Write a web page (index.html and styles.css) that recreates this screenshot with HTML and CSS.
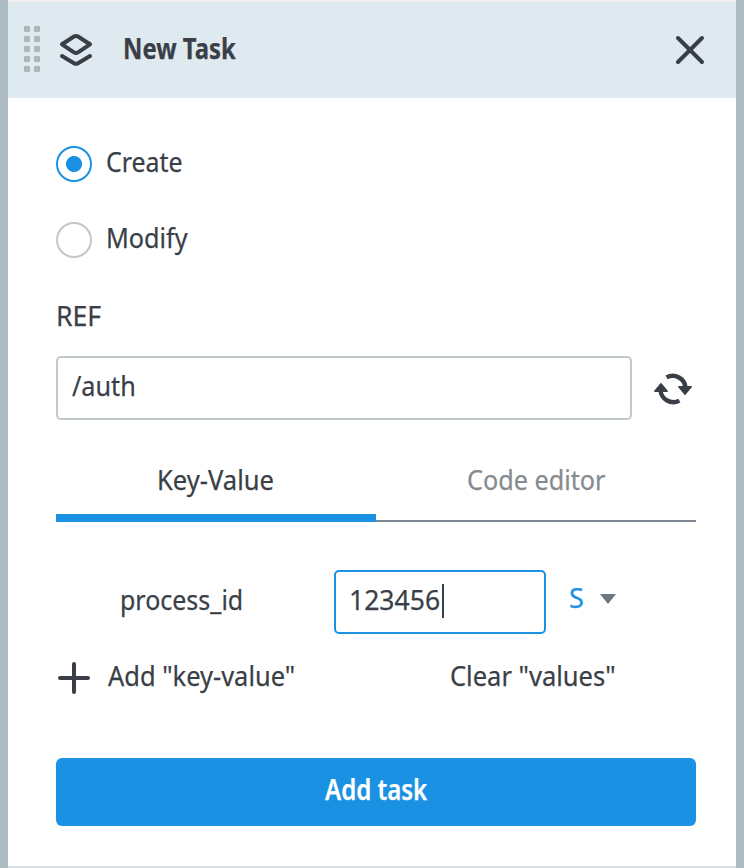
FILE: index.html
```html
<!DOCTYPE html>
<html lang="en">
<head>
<meta charset="utf-8">
<title>New Task</title>
<link rel="stylesheet" href="styles.css">
</head>
<body>
<main class="panel">
  <header class="header">
    <div class="grip"><i></i><i></i><i></i><i></i><i></i><i></i><i></i><i></i><i></i><i></i></div>
    <svg class="layers" width="36" height="36" viewBox="0 0 36 36"><path d="M16 4.500Q18 3.300 20 4.500L32 12.300L20 20.300Q18 21.700 16 20.300L4 12.300ZM4 24L16 31.200Q18 32.400 20 31.200L32 24"/></svg>
    <h1 class="title"><span class="t t-title">New Task</span></h1>
    <svg class="close" width="32" height="32" viewBox="0 0 32 32"><path d="M4 4L28 28M28 4L4 28"/></svg>
  </header>
  <section class="content">
    <div class="radio"><span class="dot on"></span><span class="t t-create">Create</span></div>
    <div class="radio"><span class="dot"></span><span class="t t-modify">Modify</span></div>
    <div class="label"><span class="t t-ref">REF</span></div>
    <div class="ref-row">
      <div class="input ref-input"><span class="t t-auth">/auth</span></div>
      <svg class="refresh" width="38" height="34" viewBox="0 0 38 34"><path class="arc" d="M12.600 5.400A12.800 12.800 0 0 1 31.500 16M25.400 28.600A12.800 12.800 0 0 1 6.500 18"/><path class="tip" d="M24.800 14.800H37.200L31 22.300ZM.8 19.200H13.200L7 11.700Z"/></svg>
    </div>
    <nav class="tabs">
      <div class="tab active"><span class="t t-key">Key-Value</span></div>
      <div class="tab"><span class="t t-code">Code editor</span></div>
    </nav>
    <div class="pair">
      <div class="name"><span class="t t-process">process_id</span></div>
      <div class="input value-input"><span class="t t-number">123456</span><span class="caret"></span></div>
      <div class="type"><span class="t t-s">S</span><svg width="16" height="10" viewBox="0 0 16 10"><path d="M0 0H16L8 10Z"/></svg></div>
    </div>
    <div class="actions">
      <svg class="plus" width="36" height="36" viewBox="0 0 36 36"><path d="M4 18H32M18 4V32"/></svg>
      <span class="add"><span class="t t-add">Add "key-value"</span></span>
      <span class="t t-clear">Clear "values"</span>
    </div>
    <div class="button"><span class="t t-task">Add task</span></div>
  </section>
</main>
</body>
</html>
```
FILE: styles.css
```css
* { box-sizing: border-box; }
body {
  margin: 0;
  height: 868px;
  overflow: hidden;
  background: #adbcc3;
  color: #3a3f47;
  font: 28px/36px "Noto Sans", sans-serif;
}
.panel {
  height: 868px;
  margin: 0 8px;
  border-top: 2px solid #f0efee;
  border-bottom: 2px solid #d5e1e6;
  background: #fff;
}
.header {
  display: flex;
  height: 96px;
  padding: 24px 30px 0 16px;
  background: #dfeaf0;
}
.grip {
  display: grid;
  grid-template-columns: 6px 6px;
  grid-auto-rows: 6px;
  gap: 4px;
}
.grip i { border-radius: 1px; background: #adb8bd; }
.layers { margin: 6px 0 0 18px; }
.title { flex: 1; margin: 4px 0 0 29px; font-size: 28px; font-weight: 700; }
.close { margin-top: 8px; }
svg path { fill: #3a3f47; }
.layers path, .close path, .plus path, .refresh .arc {
  fill: none;
  stroke: #3a3f47;
  stroke-width: 4;
  stroke-linecap: round;
  stroke-linejoin: round;
}
.refresh .arc { stroke-linecap: butt; stroke-width: 4.4; }
.refresh .tip { stroke: #3a3f47; stroke-width: 1.4; stroke-linejoin: round; }
.refresh { margin-top: 2px; }
.content { padding: 48px 40px 0 48px; }
.t { display: inline-block; white-space: nowrap; transform-origin: 0 50%; transform: scaleX(.9); -webkit-text-stroke: .25px currentColor; }
.t-title { transform: scaleX(.852); }
.t-create { transform: scaleX(.89); }
.t-ref { transform: scaleX(.95); }
.t-key { transform: scaleX(.913); }
.t-process { transform: scaleX(.892); }
.t-number { transform: scaleX(.948); }
.t-s { transform: scaleX(.97); }
.t-add { transform: scaleX(.909); }
.t-clear { transform: scaleX(.911); }
.t-task { transform: scaleX(.858); }
.radio { display: flex; height: 36px; margin-bottom: 40px; gap: 14px; line-height: 30px; }
.dot { width: 36px; height: 36px; border: 2px solid #c1c8cc; border-radius: 50%; }
.dot.on { border-color: #1b91e3; background: radial-gradient(circle, #1b91e3 7.600px, #fff 8.400px); }
.label { margin: -1px 0 23px; }
.ref-row { display: flex; align-items: center; gap: 22px; }
.input { height: 64px; border: 2px solid #c1c8cc; border-radius: 5px; line-height: 54px; }
.ref-input { width: 576px; padding-left: 14px; }
.tabs { display: flex; height: 102px; }
.tab { width: 320px; padding-top: 41px; border-bottom: 2px solid #7d8791; color: #858b8f; }
.tab.active { border-bottom: 8px solid #1b91e3; color: #3a3f47; }
.tab.active { padding-left: 101px; }
.tab:not(.active) { padding-left: 91px; }
.pair { display: flex; margin-top: 48px; }
.name { width: 278px; padding-left: 64px; line-height: 58px; }
.value-input { position: relative; width: 212px; padding-left: 13px; border-color: #1b91e3; }
.caret { position: absolute; left: 106px; top: 12px; width: 2px; height: 34px; background: #3a3f47; }
.type { display: flex; padding-left: 23px; line-height: 54px; color: #1b91e3; }
.type svg { margin: 24px 0 0 16px; }
.type path { fill: #667a84; }
.actions { display: flex; height: 36px; margin-top: 23px; }
.plus { margin-top: 3px; }
.add { width: 358px; padding-left: 16px; }
.button { height: 68px; margin-top: 65px; padding-left: 269px; border-radius: 6px; background: #1b91e3; color: #fff; font-weight: 600; line-height: 63px; }
```
